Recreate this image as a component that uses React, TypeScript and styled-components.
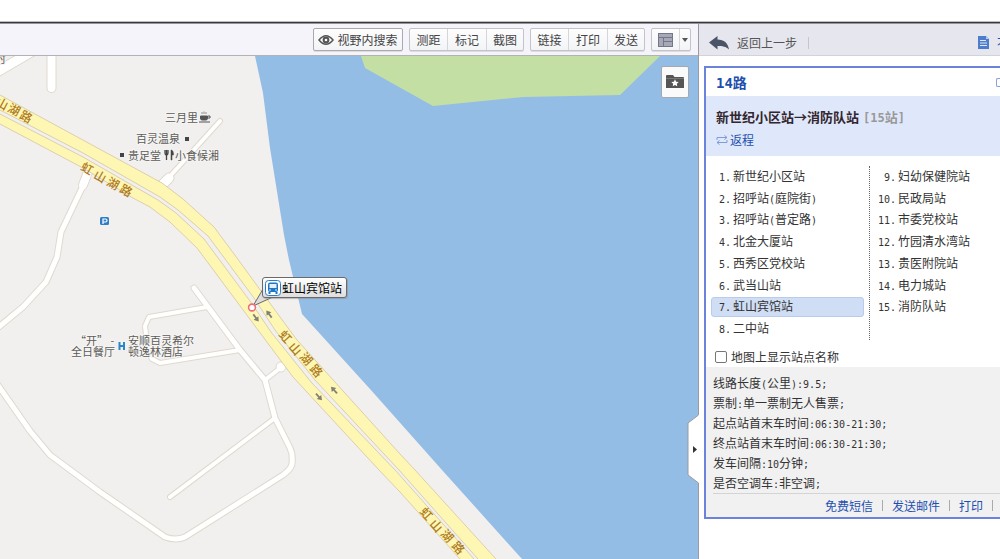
import React from "react";
import styled, { createGlobalStyle } from "styled-components";

const GlobalStyle = createGlobalStyle`
  * { box-sizing: border-box; }
  body {
    margin: 0;
    background: #fff;
    color: #333;
    font: 12px/20px "Noto Sans CJK SC", sans-serif;
  }
  button { font: inherit; color: inherit; padding: 0; margin: 0; border: 0; background: none; cursor: pointer; }
  a { color: #1d50b0; text-decoration: none; }
  ol, h1, h2, p { margin: 0; padding: 0; font-size: inherit; }
`;

/* ---------- Frame ---------- */

const Page = styled.div`
  min-height: 100vh;
  padding-top: 21px;
  display: flex;
  flex-direction: column;
  overflow: hidden;
`;

const TopRule = styled.div`
  height: 3px;
  background: #383838;
  border-top: 1px solid #c0c0c0;
  border-bottom: 1px solid #94949a;
`;

const Main = styled.div`
  flex: 1;
  display: flex;
`;

const MapColumn = styled.main`
  flex: 1;
  min-width: 0;
  display: flex;
  flex-direction: column;
`;

/* ---------- Toolbar ---------- */

const Toolbar = styled.div`
  height: 32px;
  padding-right: 7px;
  display: flex;
  align-items: center;
  justify-content: flex-end;
  gap: 6px;
  background: #f4f4fa;
  border-bottom: 1px solid #b2b2b6;
`;

const ButtonGroup = styled.div`
  height: 23px;
  display: flex;
  border: 1px solid #c3c3c8;
  border-radius: 2px;
  background: linear-gradient(#fdfdfe, #f3f4f6);
  box-shadow: 0 1px 0 #dcdce0;
`;

const ToolButton = styled.button<{ $width: number }>`
  width: ${(p) => p.$width}px;
  display: flex;
  align-items: center;
  justify-content: center;
  gap: 3px;
  line-height: 20px;
  color: #444;
  & + & { border-left: 1px solid #d6d6da; }
`;

const SearchGroup = styled(ButtonGroup)`
  border-color: #a9a9ae;
`;

/* ---------- Map ---------- */

const MapArea = styled.div`
  position: relative;
  flex: 1;
  background: #f1f0ef;
`;

const MapCanvas = styled.svg`
  position: absolute;
  inset: 0;
  width: 100%;
  height: 100%;
`;

const FavoriteButton = styled.button`
  position: absolute;
  top: 10px;
  right: 9px;
  width: 28px;
  height: 32px;
  display: flex;
  align-items: center;
  justify-content: center;
  background: #fafafa;
  border: 1px solid #a4a8b0;
  border-radius: 2px;
`;

const StationTip = styled.div`
  position: absolute;
  left: 262px;
  top: 221px;
  height: 21px;
  padding: 0 4px 0 2px;
  display: flex;
  align-items: center;
  gap: 1px;
  border: 1px solid #6a6a6a;
  border-radius: 3px;
  background: linear-gradient(#fff, #dedede);
  box-shadow: 1px 1px 1px #8888;
  color: #000;
  line-height: 18px;
  white-space: nowrap;
`;

const CollapseHandle = styled.button`
  position: absolute;
  top: 358px;
  right: -1px;
  width: 12px;
  height: 70px;
  z-index: 1;
  svg { display: block; }
`;

/* ---------- Sidebar ---------- */

const Sidebar = styled.aside`
  flex: 0 0 302px;
  min-width: 0;
  border-left: 1px solid #9a9aa0;
  overflow: hidden;
`;

const SidebarHeader = styled.div`
  height: 32px;
  padding: 6px 0 0 10px;
  display: flex;
  align-items: center;
  background: #e6e6ee;
  border-bottom: 1px solid #d2d2da;
`;

const BackButton = styled.button`
  display: flex;
  align-items: center;
  gap: 8px;
  color: #555;
  padding-right: 11px;
`;

const HeaderDivider = styled.span`
  width: 1px;
  height: 12px;
  background: #c6c6ce;
`;

const HeaderLink = styled.a`
  width: 22px;
  margin-left: auto;
  display: flex;
  align-items: center;
  gap: 8px;
  white-space: nowrap;
  svg { flex: none; }
`;

const RoutePanel = styled.section`
  margin: 10px 0 0 5px;
  border: 2px solid #6c83dc;
  border-right: 0;
`;

const RouteTitle = styled.div`
  height: 28px;
  padding-left: 10px;
  display: flex;
  align-items: center;
  justify-content: space-between;
  overflow: hidden;
  color: #1d4fae;
  font-size: 14px;
  h1 { --latin-size: 14px; }
`;

const PanelToggle = styled.button`
  width: 4px;
  height: 9px;
  border: 1px solid #8aa0dd;
  border-right: 0;
  border-radius: 2px 0 0 2px;
`;

const Direction = styled.div`
  height: 60px;
  padding: 11px 10px 0;
  background: #dfe8fa;
  line-height: 20px;
  h2 { font-size: 13px; --latin-size: 12px; color: #33262e; display: flex; gap: 4px; line-height: 20px; }
`;

const StopCount = styled.span`
  color: #999;
`;

const ReturnLink = styled.a`
  margin-top: 4px;
  display: flex;
  align-items: center;
  gap: 2px;
  line-height: 18px;
`;

const Stops = styled.div`
  min-height: 174px;
  margin: 10px 0 0 5px;
  display: flex;
`;

const StopList = styled.ol<{ $divided?: boolean }>`
  flex: ${(p) => (p.$divided ? "0 0 159px" : "1")};
  padding: ${(p) => (p.$divided ? "0 5px 0 0" : "0 0 0 6px")};
  border-right: ${(p) => (p.$divided ? "1px dotted #666" : "0")};
  display: grid;
  grid-template-rows: repeat(8, 1fr);
  align-items: center;
  list-style: none;
`;

const Stop = styled.li<{ $active?: boolean }>`
  height: 20px;
  padding-left: 1px;
  display: grid;
  grid-template-columns: 18px 1fr;
  gap: 2px;
  line-height: 16px;
  border: 1px solid ${(p) => (p.$active ? "#b9ccee" : "transparent")};
  border-radius: 3px;
  background: ${(p) => (p.$active ? "#d0def5" : "none")};
  white-space: nowrap;
`;

const StopNumber = styled.span`
  text-align: right;
`;

const ShowNames = styled.label`
  margin-top: 7px;
  padding-left: 9px;
  display: flex;
  align-items: center;
  gap: 4px;
  height: 20px;
`;

const Checkbox = styled.input`
  appearance: none;
  width: 12px;
  height: 12px;
  margin: 0;
  border: 1px solid #767676;
  border-radius: 2px;
  background: #fff;
`;

const Details = styled.div`
  padding: 6px 0 0 7px;
  background: #f1f1f1;
`;

const Actions = styled.div`
  height: 24px;
  padding-right: 7px;
  border-top: 1px solid #d4d4d4;
  display: flex;
  align-items: center;
  justify-content: flex-end;
  gap: 9px;
`;

const ActionDivider = styled.span`
  width: 1px;
  height: 11px;
  background: #aaa;
`;

/* ---------- Mixed-script text ---------- */

const Latin = styled.span`
  font-family: "DejaVu Sans Mono", monospace;
  font-size: var(--latin-size, 10px);
  line-height: 1;
`;

function Mixed({ text }: { text: string }) {
  return (
    <>
      {text.split(/([\x20-\x7e]+)/).map((part, i) =>
        i % 2 ? <Latin key={i}>{part}</Latin> : part
      )}
    </>
  );
}

/* ---------- Icons ---------- */

const EyeIcon = () => (
  <svg width="16" height="12" viewBox="0 0 16 12">
    <path d="M1 6Q8-2.500 15 6Q8 14.500 1 6Z" fill="#fff" stroke="#555" strokeWidth="1.500" />
    <circle cx="8" cy="6" r="3.400" fill="#555" />
    <circle cx="8" cy="6" r="1.300" fill="#fff" />
  </svg>
);

const LayoutIcon = () => (
  <svg width="15" height="14" viewBox="0 0 15 14">
    <rect x=".5" y=".5" width="14" height="13" fill="#a6a8b8" stroke="#74768a" />
    <path d="M1 4.500H14M5.500 4.500V13M6 8.500H14" stroke="#74768a" fill="none" />
  </svg>
);

const CaretIcon = () => (
  <svg width="6" height="4" viewBox="0 0 6 4">
    <path d="M0 0H6L3 4Z" fill="#555" />
  </svg>
);

const FolderIcon = () => (
  <svg width="18" height="14" viewBox="0 0 18 14">
    <path d="M0 1Q0 0 1 0H7L8.500 2H17Q18 2 18 3V13H0Z" fill="#555" />
    <path d="M0 3.500H18" stroke="#777" />
    <path d="M9 4.300L10.100 6.700L12.700 7L10.800 8.700L11.300 11.300L9 10L6.700 11.300L7.200 8.700L5.300 7L7.900 6.700Z" fill="#fff" />
  </svg>
);

const BackIcon = () => (
  <svg width="20" height="14" viewBox="0 0 20 14">
    <path d="M0 6.500L8.500 0V3.500C15 3.500 19 7 20 13.500C17 10.500 13.500 10 8.500 10V13.500Z" fill="#4b5568" />
  </svg>
);

const DocumentIcon = () => (
  <svg width="11" height="13" viewBox="0 0 11 13">
    <path d="M0 0H8L11 3V13H0Z" fill="#4d7dcb" />
    <path d="M2 4.500H8M2 7H9M2 9.500H9" stroke="#dfe8fa" />
    <path d="M8 0V3H11Z" fill="#b9cdf0" />
  </svg>
);

const SwapIcon = () => (
  <svg width="12" height="10" viewBox="0 0 12 10" fill="none" stroke="#7f9bdc">
    <path d="M1 5V2.500H11M8.500 .5L11 2.500L8.500 4.500M11 5V7.500H1M3.500 5.500L1 7.500L3.500 9.500" />
  </svg>
);

const BusIcon = () => (
  <svg width="16" height="16" viewBox="0 0 16 16">
    <rect x=".5" y=".5" width="15" height="15" rx="3" fill="#fff" stroke="#2b7cc4" />
    <rect x="3" y="2.500" width="10" height="9.500" rx="2" fill="#1f76c4" />
    <rect x="4.500" y="4" width="7" height="4" fill="#e4f1fc" />
    <circle cx="5" cy="10" r=".8" fill="#fff" />
    <circle cx="11" cy="10" r=".8" fill="#fff" />
    <path d="M4.500 12V14M11.500 12V14" stroke="#1f76c4" strokeWidth="2" />
  </svg>
);

/* ---------- Map drawing ---------- */

const lanes: { d: string; w: number }[] = [
  { d: "M-10 76L45 44", w: 9 },
  { d: "M51.500 40V88", w: 8 },
  { d: "M220 121L172 174", w: 4 },
  { d: "M169 178L160 187", w: 9 },
  { d: "M88 172L83 185", w: 8 },
  { d: "M82 188L61 232L57 257L46 282L23 307L-5 330", w: 5 },
  { d: "M207 307L149 317L145 326L148 352L152 359L160 363L240 350", w: 4 },
  { d: "M170 497L275 418", w: 4 },
  { d: "M265 380L279 369", w: 4 },
  {
    d: "M194 288L240 350L265 380L275 418L290 448Q293 454 292 464Q291 469 283 475L185 537Q176 541 165 537L100 492L50 455L30 431L-5 381",
    w: 5,
  },
];

const carriageways = [
  "M-5 92L0 95L162 183L183 199L214 227L237 258L280 317L297 340L400 454L415 470L496 559L860 960H842L478 559L399 470L315 380L275 330L254 298L208 236L178 210L160 197L83 153L0 110L-5 107Z",
  "M-5 111L0 114L83 157L158 200L176 213L204 239L250 301L271 332L311 382L396 471L474 559L838 960H824L460 559L400 492L379 470L293 377L258 330L197 248L170 222L150 207L133 198L83 168L0 124L-5 121Z",
];

const RoadName = styled.text`
  font-size: 12px;
  font-weight: 500;
  fill: #ad7a22;
  text-anchor: middle;
`;

const PoiName = styled.text`
  font-size: 11px;
  fill: #5c5c58;
  paint-order: stroke;
  stroke: #f6f5f4;
  stroke-width: 2px;
`;

const roadNames: { angle: number; glyphs: [string, number, number][] }[] = [
  { angle: 28, glyphs: [["山", 2, 104], ["湖", 14, 110], ["路", 26, 117]] },
  { angle: 29, glyphs: [["虹", 87, 169], ["山", 100, 177], ["湖", 113, 184], ["路", 126, 191]] },
  { angle: 48, glyphs: [["虹", 285, 337], ["山", 295, 349], ["湖", 306, 359], ["路", 316, 371]] },
  { angle: 48, glyphs: [["虹", 426, 514], ["山", 436, 526], ["湖", 447, 536], ["路", 458, 548]] },
];

const poiNames: [string, number, number][] = [
  ["时", -5, 63],
  ["三月里", 165, 122],
  ["百灵温泉", 136, 143],
  ["贵足堂", 128, 160],
  ["小食候湘", 175, 160],
  ["“开” -", 75, 345],
  ["全日餐厅", 71, 356],
  ["安顺百灵希尔", 128, 345],
  ["顿逸林酒店", 128, 356],
];

const arrows: [number, number, number][] = [
  [256, 318, 53],
  [269, 314, 233],
  [319, 397, 48],
  [334, 390, 228],
];

function CityMap() {
  return (
    <MapCanvas role="img" aria-label="地图">
      <g transform="translate(0 -56)">
        <path d="M255 56L263 93L270 148L284 235L289 260L302 314L370 389L442 470L522 559L880 960H4000V0H243Z" fill="#94bde6" />
        <path d="M361 56L365 68L433 106L523 97L620 95L660 56L716 0H345Z" fill="#c4dfa4" />
        <g fill="none" strokeLinecap="round" strokeLinejoin="round">
          {lanes.map((r) => <path key={r.d} d={r.d} stroke="#e0d9cc" strokeWidth={r.w + 2} />)}
          <circle cx="281" cy="367" r="5" fill="#fff" stroke="#e0d9cc" />
          {lanes.map((r) => <path key={r.d} d={r.d} stroke="#fff" strokeWidth={r.w} />)}
        </g>
        {carriageways.map((d) => <path key={d} d={d} fill="#fef6b3" stroke="#dccfac" />)}
        {arrows.map(([x, y, a]) => (
          <g key={`${x}-${y}`} transform={`translate(${x} ${y}) rotate(${a})`}>
            <path d="M-4.500 0H1" stroke="#808078" strokeWidth="1.800" />
            <path d="M0-3L4.500 0L0 3Z" fill="#808078" />
          </g>
        ))}
        {roadNames.map((name) =>
          name.glyphs.map(([ch, x, y]) => (
            <RoadName key={`${x}-${y}`} y="4" transform={`translate(${x} ${y}) rotate(${name.angle})`}>
              {ch}
            </RoadName>
          ))
        )}
        {poiNames.map(([text, x, y]) => (
          <PoiName key={`${x}-${y}`} x={x} y={y}>{text}</PoiName>
        ))}
        {/* café cup */}
        <path d="M200.500 116H207.500V118Q207.500 120 206 120H202Q200.500 120 200.500 118ZM199 122H210" fill="#555" stroke="#555" />
        <path d="M208 116H210V118H208" fill="none" stroke="#555" />
        <path d="M202 112V114M204 111.500V114M206 112V114" stroke="#777" strokeWidth=".8" />
        <rect x="185" y="137" width="4" height="4" fill="#444" />
        <rect x="120" y="153" width="4" height="4" fill="#444" />
        {/* fork and knife */}
        <path d="M165 150V153Q165 155 166.500 155T168 153V150M166.500 150V160" fill="none" stroke="#444" strokeWidth="1.300" />
        <path d="M171 160V150Q173.500 150 173.500 155H172V160Z" fill="#444" stroke="#444" strokeWidth=".5" />
        {/* parking */}
        <rect x="100" y="217" width="9" height="8" rx="1.500" fill="#2f7dc6" />
        <path d="M103 224V219H105.500Q107 219 107 220.500T105.500 222H103" fill="none" stroke="#fff" strokeWidth="1.200" />
        {/* hotel */}
        <path d="M119.500 342V350M124 342V350M119.500 346H124" stroke="#2b86c5" strokeWidth="2" />
        <path d="M253 306L263 289L273 297Z" fill="#ddd" stroke="#6a6a6a" />
        <circle cx="252" cy="307.500" r="3.400" fill="#fff" stroke="#ef6d78" strokeWidth="1.600" />
      </g>
    </MapCanvas>
  );
}

/* ---------- Data ---------- */

const outbound = ["新世纪小区站", "招呼站(庭院街)", "招呼站(普定路)", "北金大厦站", "西秀区党校站", "武当山站", "虹山宾馆站", "二中站"];
const onward = ["妇幼保健院站", "民政局站", "市委党校站", "竹园清水湾站", "贵医附院站", "电力城站", "消防队站"];
const details = [
  "线路长度(公里):9.5;",
  "票制:单一票制无人售票;",
  "起点站首末车时间:06:30-21:30;",
  "终点站首末车时间:06:30-21:30;",
  "发车间隔:10分钟;",
  "是否空调车:非空调;",
];

function StopColumn({ stops, first, divided }: { stops: string[]; first: number; divided?: boolean }) {
  return (
    <StopList $divided={divided}>
      {stops.map((stop, i) => (
        <Stop key={stop} $active={stop === "虹山宾馆站"}>
          <StopNumber><Mixed text={`${first + i}.`} /></StopNumber>
          <span><Mixed text={stop} /></span>
        </Stop>
      ))}
    </StopList>
  );
}

export default function App() {
  return (
    <Page>
      <GlobalStyle />
      <TopRule />
      <Main>
        <MapColumn>
          <Toolbar>
            <SearchGroup>
              <ToolButton $width={88}><EyeIcon />视野内搜索</ToolButton>
            </SearchGroup>
            <ButtonGroup>
              <ToolButton $width={37}>测距</ToolButton>
              <ToolButton $width={39}>标记</ToolButton>
              <ToolButton $width={37}>截图</ToolButton>
            </ButtonGroup>
            <ButtonGroup>
              <ToolButton $width={37}>链接</ToolButton>
              <ToolButton $width={39}>打印</ToolButton>
              <ToolButton $width={37}>发送</ToolButton>
            </ButtonGroup>
            <ButtonGroup>
              <ToolButton $width={27} aria-label="布局"><LayoutIcon /></ToolButton>
              <ToolButton $width={11} aria-label="更多布局"><CaretIcon /></ToolButton>
            </ButtonGroup>
          </Toolbar>
          <MapArea>
            <CityMap />
            <StationTip><BusIcon />虹山宾馆站</StationTip>
            <FavoriteButton aria-label="收藏夹"><FolderIcon /></FavoriteButton>
            <CollapseHandle aria-label="收起侧栏">
              <svg width="12" height="70" viewBox="0 0 12 70">
                <path d="M12 .5L11.500 1L1 9V61L11.500 69H12Z" fill="#fff" />
                <path d="M11.500 1L1 9V61L11.500 69" fill="none" stroke="#9a9aa0" />
                <path d="M6 32V39L10 35.500Z" fill="#333" />
              </svg>
            </CollapseHandle>
          </MapArea>
        </MapColumn>
        <Sidebar>
          <SidebarHeader>
            <BackButton><BackIcon />返回上一步</BackButton>
            <HeaderDivider />
            <HeaderLink href="#"><DocumentIcon />不</HeaderLink>
          </SidebarHeader>
          <RoutePanel>
            <RouteTitle>
              <h1><Mixed text="14路" /></h1>
              <PanelToggle aria-label="展开" />
            </RouteTitle>
            <Direction>
              <h2>
                新世纪小区站→消防队站
                <StopCount><Mixed text="[15站]" /></StopCount>
              </h2>
              <ReturnLink href="#"><SwapIcon />返程</ReturnLink>
            </Direction>
            <Stops>
              <StopColumn stops={outbound} first={1} divided />
              <StopColumn stops={onward} first={9} />
            </Stops>
            <ShowNames><Checkbox type="checkbox" />地图上显示站点名称</ShowNames>
            <Details>
              {details.map((line) => <p key={line}><Mixed text={line} /></p>)}
              <Actions>
                <a href="#">免费短信</a>
                <ActionDivider />
                <a href="#">发送邮件</a>
                <ActionDivider />
                <a href="#">打印</a>
                <ActionDivider />
              </Actions>
            </Details>
          </RoutePanel>
        </Sidebar>
      </Main>
    </Page>
  );
}
